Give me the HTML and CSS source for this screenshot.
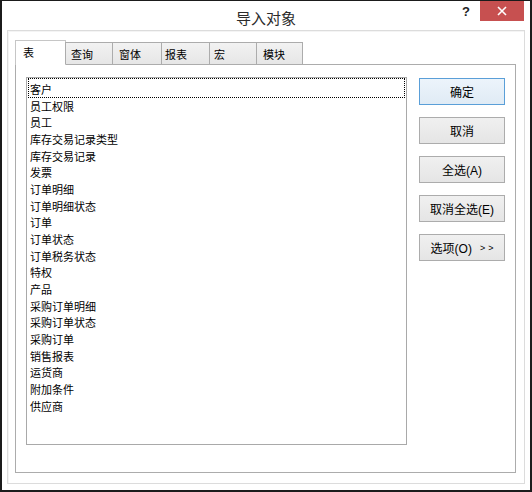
FILE: index.html
```html
<!DOCTYPE html>
<html lang="zh-CN">
<head>
<meta charset="utf-8">
<title>导入对象</title>
<link rel="stylesheet" href="styles.css">
</head>
<body>
<div class="window">
  <div class="titlebar">
    <div></div>
    <div class="title">导入对象</div>
    <div class="controls">
      <span class="help">?</span>
      <span class="close">
        <svg width="10" height="10" viewBox="0 0 10 10"><path d="M1 1 L9 9 M9 1 L1 9" stroke="#fff" stroke-width="1.6" fill="none"/></svg>
      </span>
    </div>
  </div>
  <div class="frame">
    <div class="tabs">
      <div class="tab active">表</div>
      <div class="tab t2">查询</div>
      <div class="tab t3">窗体</div>
      <div class="tab t4">报表</div>
      <div class="tab t5">宏</div>
      <div class="tab t6">模块</div>
    </div>
    <div class="panel">
      <ul class="listbox">
        <li class="item focused">客户</li>
        <li class="item">员工权限</li>
        <li class="item">员工</li>
        <li class="item">库存交易记录类型</li>
        <li class="item">库存交易记录</li>
        <li class="item">发票</li>
        <li class="item">订单明细</li>
        <li class="item">订单明细状态</li>
        <li class="item">订单</li>
        <li class="item">订单状态</li>
        <li class="item">订单税务状态</li>
        <li class="item">特权</li>
        <li class="item">产品</li>
        <li class="item">采购订单明细</li>
        <li class="item">采购订单状态</li>
        <li class="item">采购订单</li>
        <li class="item">销售报表</li>
        <li class="item">运货商</li>
        <li class="item">附加条件</li>
        <li class="item">供应商</li>
      </ul>
      <div class="buttons">
        <button class="btn default">确定</button>
        <button class="btn">取消</button>
        <button class="btn">全选(A)</button>
        <button class="btn">取消全选(E)</button>
        <button class="btn">选项(O)<span class="more">&gt;&gt;</span></button>
      </div>
    </div>
  </div>
</div>
</body>
</html>
```
FILE: styles.css
```css
* { box-sizing: border-box; }
html, body { margin: 0; padding: 0; background: #fff; }
body {
  font-family: "Liberation Sans", "Noto Sans CJK SC", sans-serif;
  color: #000;
}
.window {
  width: 532px;
  height: 492px;
  border-style: solid;
  border-color: #1b1b1b;
  border-width: 1px 2px 2px 2px;
  background: #fff;
  display: flex;
  flex-direction: column;
}
.titlebar {
  height: 29px;
  display: grid;
  grid-template-columns: 1fr auto 1fr;
  align-items: start;
}
.title {
  font-size: 15px;
  line-height: 15px;
  padding-top: 9px;
  color: #2b2b2b;
  font-family: "Noto Sans CJK SC", sans-serif;
}
.controls {
  display: flex;
  justify-content: flex-end;
  align-items: flex-start;
  padding-right: 6px;
}
.help {
  font-size: 13px;
  font-weight: bold;
  line-height: 13px;
  margin-top: 4px;
  margin-right: 10px;
  color: #222;
  font-family: "Liberation Sans", sans-serif;
}
.close {
  width: 44px;
  height: 20px;
  background: #c75050;
  display: flex;
  align-items: center;
  justify-content: center;
}
.frame {
  margin: 0 5px 6px 5px;
  height: 454px;
  border: 1px solid #dcdcdc;
  box-shadow: inset 1px 1px 0 #f4f4f4;
  padding: 9px 8px 10px 7px;
  display: flex;
  flex-direction: column;
}
.tabs {
  display: flex;
  align-items: flex-end;
  height: 24px;
  position: relative;
  z-index: 1;
}
.tab {
  font-family: "Noto Sans CJK SC", sans-serif;
  font-size: 11px;
  height: 22px;
  line-height: 22px;
  padding-left: 4px;
  border: 1px solid #acacac;
  border-bottom: none;
  background: linear-gradient(#f2f2f2, #e6e6e6);
  margin-left: -1px;
  color: #000;
}
.tab.active {
  margin-left: 0;
  width: 51px;
  height: 25px;
  margin-bottom: -1px;
  background: #fff;
  padding-left: 7px;
  line-height: 22px;
  border-color: #c6c6c6;
}
.t2 { width: 48px; padding-left: 5px; }
.t3 { width: 50px; padding-left: 6px; }
.t4 { width: 49px; padding-left: 3px; }
.t5 { width: 48px; padding-left: 4px; }
.t6 { width: 47px; padding-left: 6px; }
.panel {
  width: 501px;
  height: 409px;
  border: 1px solid #acacac;
  background: #fff;
  padding: 12px 10px 0 10px;
  display: flex;
  align-items: flex-start;
}
.listbox {
  list-style: none;
  margin: 0;
  padding: 3px 0 0 0;
  width: 381px;
  height: 368px;
  border: 1px solid #a9a9a9;
  flex: none;
}
.item {
  font-family: "Noto Sans CJK SC", sans-serif;
  font-size: 11px;
  height: 16.68px;
  line-height: 16.68px;
  padding-left: 3px;
  color: #000;
  position: relative;
  white-space: nowrap;
}
.item.focused::after {
  content: "";
  position: absolute;
  left: 1px;
  right: 1px;
  top: -3px;
  bottom: 0;
  border: 1px dotted #000;
}
.buttons {
  margin-left: 12px;
  margin-top: 1px;
  display: flex;
  flex-direction: column;
  gap: 12px;
}
.btn {
  width: 86px;
  height: 27px;
  border: 1px solid #acacac;
  background: linear-gradient(#f0f0f0, #e5e5e5);
  font-family: "Liberation Sans", "Noto Sans CJK SC", sans-serif;
  font-size: 12px;
  color: #000;
  padding: 0;
  display: flex;
  align-items: center;
  justify-content: center;
}
.btn.default {
  border-color: #5a9fd8;
  background: linear-gradient(#ecf4fb, #e0ebf5);
}
.more {
  font-size: 9px;
  letter-spacing: 3px;
  margin-left: 8px;
  margin-right: -3px;
}
```
